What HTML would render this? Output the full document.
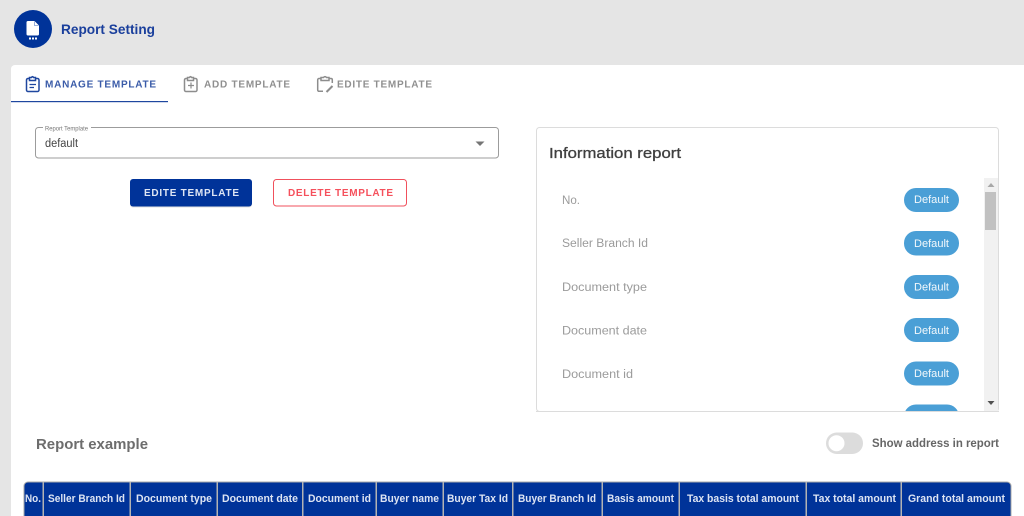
<!DOCTYPE html>
<html><head><meta charset="utf-8"><title>Report Setting</title>
<style>
html,body{margin:0;padding:0;width:1024px;height:516px;overflow:hidden;background:#e5e5e5}
svg{display:block;filter:blur(.25px)}
text{font-family:"Liberation Sans",sans-serif}
</style></head><body>
<svg width="1024" height="516" viewBox="0 0 1024 516" xmlns="http://www.w3.org/2000/svg">
<defs><clipPath id="card"><rect x="536" y="127" width="463" height="284"/></clipPath></defs>
<rect width="1024" height="516" fill="#e5e5e5"/>
<path d="M11 69a4 4 0 0 1 4-4H1024V516H11Z" fill="#fff"/>

<!-- header -->
<circle cx="33" cy="29" r="19" fill="#003399"/>
<path d="M28 21H34.500L39 25.500V34a1.500 1.500 0 0 1-1.500 1.500H28A1.500 1.500 0 0 1 26.500 34V22.500A1.500 1.500 0 0 1 28 21Z" fill="#fff"/>
<path d="M34.500 21.500V25.500H38.500" fill="none" stroke="#7f9bd2" stroke-width=".8"/>
<rect x="29" y="37.500" width="2" height="2" fill="#fff"/><rect x="32" y="37.500" width="2" height="2" fill="#fff"/><rect x="35" y="37.500" width="2" height="2" fill="#fff"/>
<text x="61" y="34" font-size="14" font-weight="700" fill="#1a3f9c" textLength="94" lengthAdjust="spacingAndGlyphs">Report Setting</text>

<!-- tabs -->
<g fill="none" stroke="#1f479f" stroke-width="1.500">
<rect x="26.500" y="78.500" width="12.500" height="13" rx="1.500"/>
<path d="M29.500 80.500V77.500H31.500Q32.500 75.800 33.500 77.500H35.500V80.500Z" fill="#fff"/>
<path d="M29.500 84.500H36M29.500 87.500H34" stroke-width="1.200"/>
</g>
<text x="45" y="87.700" font-size="10" font-weight="700" fill="#3a5ba8" textLength="111" lengthAdjust="spacing">MANAGE TEMPLATE</text>
<rect x="11" y="101" width="157" height="1.200" fill="#1f479f"/>

<g fill="none" stroke="#8d8d8d" stroke-width="1.500">
<rect x="184.500" y="78.500" width="12.500" height="13" rx="1.500"/>
<path d="M187.500 80.500V77.500H189.500Q190.500 75.800 191.500 77.500H193.500V80.500Z" fill="#fff"/>
<path d="M188 85.500H194M191 82.500V88.500" stroke-width="1.200"/>
</g>
<text x="204" y="87.700" font-size="10" font-weight="700" fill="#8f8f8f" textLength="86" lengthAdjust="spacing">ADD TEMPLATE</text>

<g fill="none" stroke="#8d8d8d" stroke-width="1.500">
<path d="M321 78.500H319a1.300 1.300 0 0 0-1.300 1.300V90a1.300 1.300 0 0 0 1.300 1.300H323M329 78.500H331a1.300 1.300 0 0 1 1.300 1.300V83"/>
<path d="M321 80.500V77.500H323.500Q325 75.800 326.500 77.500H329V80.500Z" fill="#fff"/>
<path d="M326.500 92L332.500 86" stroke-width="2"/>
</g>
<text x="337" y="87.700" font-size="10" font-weight="700" fill="#8f8f8f" textLength="95" lengthAdjust="spacing">EDITE TEMPLATE</text>

<!-- select -->
<rect x="35.500" y="127.500" width="463" height="30.500" rx="3" fill="#fff" stroke="#9c9c9c"/>
<rect x="43" y="125" width="48" height="5" fill="#fff"/>
<text x="45" y="130.500" font-size="6" fill="#777" textLength="43" lengthAdjust="spacingAndGlyphs">Report Template</text>
<text x="45" y="147" font-size="11.500" fill="#444" textLength="33" lengthAdjust="spacingAndGlyphs">default</text>
<path d="M475.500 141.500H484.500L480 146Z" fill="#757575"/>

<!-- buttons -->
<rect x="130" y="180" width="122" height="27.500" rx="3" fill="#000" opacity=".12"/>
<rect x="130" y="179" width="122" height="27.500" rx="3" fill="#003399"/>
<text x="144" y="196.200" font-size="10" font-weight="700" fill="#dfe6f4" textLength="95" lengthAdjust="spacing">EDITE TEMPLATE</text>
<rect x="273.500" y="179.500" width="133" height="26.500" rx="3" fill="#fff" stroke="#f0505c"/>
<text x="288" y="196.200" font-size="10" font-weight="700" fill="#f5505c" textLength="105" lengthAdjust="spacing">DELETE TEMPLATE</text>

<!-- info card -->
<rect x="536.500" y="127.500" width="462" height="284" rx="3" fill="#fff" stroke="#dcdcdc"/>
<text x="549" y="158" font-size="14.500" fill="#3f3f3f" stroke="#3f3f3f" stroke-width=".3" textLength="132" lengthAdjust="spacingAndGlyphs">Information report</text>
<g font-size="11.500" fill="#9b9b9b">
<text x="562" y="204" textLength="18" lengthAdjust="spacingAndGlyphs">No.</text>
<text x="562" y="247" textLength="86" lengthAdjust="spacingAndGlyphs">Seller Branch Id</text>
<text x="562" y="291" textLength="85" lengthAdjust="spacingAndGlyphs">Document type</text>
<text x="562" y="334.500" textLength="85" lengthAdjust="spacingAndGlyphs">Document date</text>
<text x="562" y="378" textLength="71" lengthAdjust="spacingAndGlyphs">Document id</text>
</g>
<g fill="#4a9fd6" clip-path="url(#card)">
<rect x="904" y="188" width="55" height="24" rx="12"/>
<rect x="904" y="231" width="55" height="24.500" rx="12"/>
<rect x="904" y="275" width="55" height="24" rx="12"/>
<rect x="904" y="318" width="55" height="24" rx="12"/>
<rect x="904" y="361.500" width="55" height="24" rx="12"/>
<rect x="904" y="404.500" width="55" height="24" rx="12"/>
</g>
<g font-size="11" fill="#f2f8fc">
<text x="914" y="203" textLength="35" lengthAdjust="spacingAndGlyphs">Default</text>
<text x="914" y="247" textLength="35" lengthAdjust="spacingAndGlyphs">Default</text>
<text x="914" y="290.500" textLength="35" lengthAdjust="spacingAndGlyphs">Default</text>
<text x="914" y="334" textLength="35" lengthAdjust="spacingAndGlyphs">Default</text>
<text x="914" y="377" textLength="35" lengthAdjust="spacingAndGlyphs">Default</text>
</g>
<rect x="984" y="178" width="14" height="233" fill="#f1f1f1"/>
<rect x="985" y="192" width="11" height="38" fill="#c1c1c1"/>
<path d="M987.500 187L991 183L994.500 187Z" fill="#a8a8a8"/>
<path d="M987.500 401L991 405L994.500 401Z" fill="#505050"/>
<rect x="536" y="411" width="463" height="1" fill="#dcdcdc"/>

<!-- report example -->
<text x="36" y="449" font-size="15" font-weight="700" fill="#6d6d6d" textLength="112" lengthAdjust="spacingAndGlyphs">Report example</text>
<rect x="826" y="432.500" width="37" height="21.500" rx="10.750" fill="#dcdcdc"/>
<circle cx="836.500" cy="443.200" r="8" fill="#fff"/>
<text x="872" y="447" font-size="11.500" font-weight="700" fill="#666" textLength="127" lengthAdjust="spacingAndGlyphs">Show address in report</text>

<!-- table -->
<path d="M24 516V486a4 4 0 0 1 4-4H1007a4 4 0 0 1 4 4V516Z" fill="#003399"/>
<path d="M24 516V486a4 4 0 0 1 4-4H1007a4 4 0 0 1 4 4V516" fill="none" stroke="#a9a9a9" stroke-width="1"/>
<g fill="#b3b3b3">
<rect x="42.500" y="482" width="1.500" height="34"/>
<rect x="129.500" y="482" width="1.500" height="34"/>
<rect x="216.500" y="482" width="1.500" height="34"/>
<rect x="302" y="482" width="1.500" height="34"/>
<rect x="375.500" y="482" width="1.500" height="34"/>
<rect x="442.500" y="482" width="1.500" height="34"/>
<rect x="512" y="482" width="1.500" height="34"/>
<rect x="601.500" y="482" width="1.500" height="34"/>
<rect x="678.500" y="482" width="1.500" height="34"/>
<rect x="805.500" y="482" width="1.500" height="34"/>
<rect x="900.500" y="482" width="1.500" height="34"/>
</g>
<g font-size="11" font-weight="700" fill="#dde4f3">
<text x="25" y="502" textLength="16" lengthAdjust="spacingAndGlyphs">No.</text>
<text x="48" y="502" textLength="77" lengthAdjust="spacingAndGlyphs">Seller Branch Id</text>
<text x="136" y="502" textLength="76" lengthAdjust="spacingAndGlyphs">Document type</text>
<text x="222" y="502" textLength="76" lengthAdjust="spacingAndGlyphs">Document date</text>
<text x="308" y="502" textLength="63" lengthAdjust="spacingAndGlyphs">Document id</text>
<text x="380" y="502" textLength="59" lengthAdjust="spacingAndGlyphs">Buyer name</text>
<text x="447" y="502" textLength="61" lengthAdjust="spacingAndGlyphs">Buyer Tax Id</text>
<text x="518" y="502" textLength="78" lengthAdjust="spacingAndGlyphs">Buyer Branch Id</text>
<text x="607" y="502" textLength="67" lengthAdjust="spacingAndGlyphs">Basis amount</text>
<text x="687" y="502" textLength="112" lengthAdjust="spacingAndGlyphs">Tax basis total amount</text>
<text x="813" y="502" textLength="83" lengthAdjust="spacingAndGlyphs">Tax total amount</text>
<text x="908" y="502" textLength="97" lengthAdjust="spacingAndGlyphs">Grand total amount</text>
</g>
</svg>
</body></html>
